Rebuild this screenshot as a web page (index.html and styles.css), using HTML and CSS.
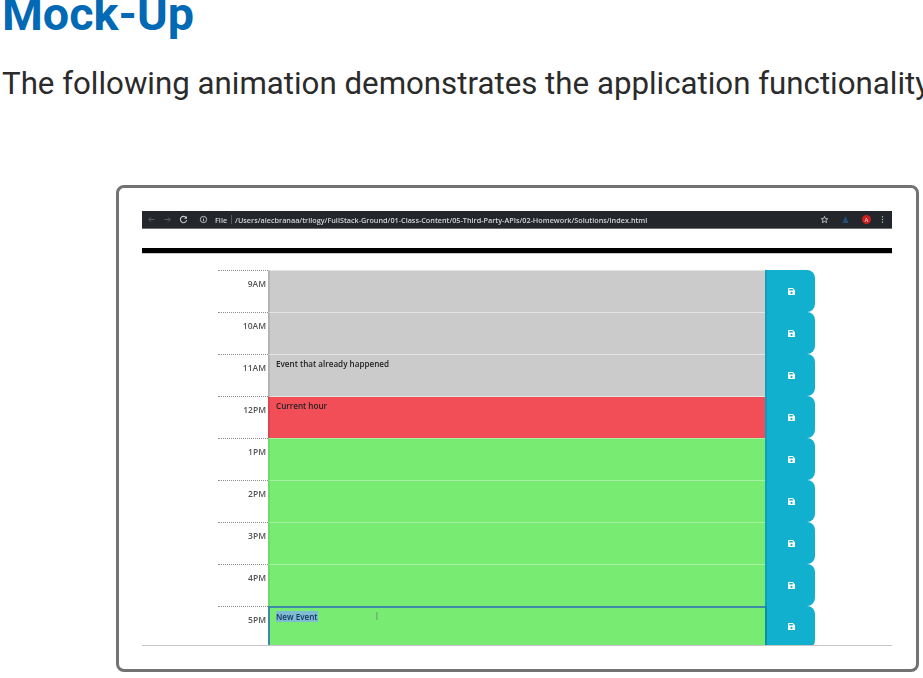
FILE: index.html
```html
<!DOCTYPE html>
<html lang="en">
<head>
    <meta charset="UTF-8">
    <meta name="viewport" content="width=device-width, initial-scale=1.0">
    <title>Mock-Up</title>
    <link rel="stylesheet" href="styles.css">
</head>
<body>
    <!-- Icono de guardar, se reutiliza en cada fila -->
    <svg class="oculto">
        <symbol id="icono-guardar" viewBox="0 0 8 8">
            <path d="M0 1a1 1 0 0 1 1-1h4.500L8 2.500V7a1 1 0 0 1-1 1H1a1 1 0 0 1-1-1zM1.500 1v1.800h4V1zM4 4.300a1.300 1.300 0 1 0 0 2.600 1.300 1.300 0 0 0 0-2.600z" fill="#fff" fill-rule="evenodd"/>
        </symbol>
    </svg>

    <main>
        <h2 class="titulo">Mock-Up</h2>
        <p class="intro">The following animation demonstrates the application functionality:</p>

        <div class="captura">
            <!-- Barra del navegador -->
            <div class="navegador">
                <svg class="nav-icono tenue" viewBox="0 0 10 10"><path d="M8.500 5H2M4.500 2.500 2 5l2.500 2.500" fill="none" stroke="currentColor" stroke-width="1"/></svg>
                <svg class="nav-icono tenue" viewBox="0 0 10 10"><path d="M1.500 5H8M5.500 2.500 8 5 5.500 7.500" fill="none" stroke="currentColor" stroke-width="1"/></svg>
                <svg class="nav-icono" viewBox="0 0 10 10"><path d="M8 3.200A3.500 3.500 0 1 0 8.500 5.500" fill="none" stroke="currentColor" stroke-width="1.200"/><path d="M8.800 1v3.200H5.600z" fill="currentColor"/></svg>
                <svg class="nav-icono info" viewBox="0 0 10 10"><circle cx="5" cy="5" r="3.500" fill="none" stroke="currentColor" stroke-width="1"/><path d="M5 3v.8M5 4.500V7" stroke="currentColor" stroke-width="1"/></svg>
                <span class="url">File</span>
                <span class="separador"></span>
                <span class="url">/Users/alecbranaa/trilogy/FullStack-Ground/01-Class-Content/05-Third-Party-APIs/02-Homework/Solutions/index.html</span>
                <span class="espacio"></span>
                <svg class="nav-icono" viewBox="0 0 10 10"><path d="M5 1.500 6 4l2.600.2-2 1.700.7 2.600L5 7.100 2.700 8.500l.7-2.600-2-1.700L4 4z" fill="none" stroke="currentColor" stroke-width="1"/></svg>
                <svg class="nav-icono azul" viewBox="0 0 10 10"><path d="M5 1 8.500 9h-7z" fill="currentColor"/></svg>
                <span class="avatar">A</span>
                <svg class="nav-icono" viewBox="0 0 10 10"><path d="M5 1.500v1.200M5 4.400v1.200M5 7.300v1.200" stroke="currentColor" stroke-width="1.300"/></svg>
            </div>

            <div class="linea-negra"></div>

            <!-- Planificador -->
            <div class="planificador">
                <div class="fila"><div class="hora">9AM</div><div class="evento pasado"></div><div class="guardar"><svg class="disco"><use href="#icono-guardar"/></svg></div></div>
                <div class="fila"><div class="hora">10AM</div><div class="evento pasado"></div><div class="guardar"><svg class="disco"><use href="#icono-guardar"/></svg></div></div>
                <div class="fila"><div class="hora">11AM</div><div class="evento pasado">Event that already happened</div><div class="guardar"><svg class="disco"><use href="#icono-guardar"/></svg></div></div>
                <div class="fila"><div class="hora">12PM</div><div class="evento presente">Current hour</div><div class="guardar"><svg class="disco"><use href="#icono-guardar"/></svg></div></div>
                <div class="fila"><div class="hora">1PM</div><div class="evento futuro"></div><div class="guardar"><svg class="disco"><use href="#icono-guardar"/></svg></div></div>
                <div class="fila"><div class="hora">2PM</div><div class="evento futuro"></div><div class="guardar"><svg class="disco"><use href="#icono-guardar"/></svg></div></div>
                <div class="fila"><div class="hora">3PM</div><div class="evento futuro"></div><div class="guardar"><svg class="disco"><use href="#icono-guardar"/></svg></div></div>
                <div class="fila"><div class="hora">4PM</div><div class="evento futuro"></div><div class="guardar"><svg class="disco"><use href="#icono-guardar"/></svg></div></div>
                <div class="fila ultima"><div class="hora">5PM</div><div class="evento futuro activo"><span class="seleccion">New Event</span><span class="cursor">I</span></div><div class="guardar"><svg class="disco"><use href="#icono-guardar"/></svg></div></div>
            </div>
        </div>
    </main>
</body>
</html>
```

FILE: styles.css
```css
/* Pagina general */
html, body {
    height: 100%;
    overflow: hidden;
}

body {
    margin: 0;
    background-color: #fff;
    color: #24292e;
    font-family: Roboto, "Liberation Sans", sans-serif;
}

main {
    width: 1000px;
    padding-left: 2px;
}

.oculto {
    display: none;
}

.titulo {
    margin: -11px 0 0;
    font-size: 46.7px;
    line-height: 50px;
    font-weight: 700;
    color: #0269b4;
}

.intro {
    margin: 27px 0 0;
    font-size: 31.25px;
    line-height: 36px;
    white-space: nowrap;
    color: #2b2b2b;
}

/* Tarjeta con la captura animada */
.captura {
    box-sizing: border-box;
    width: 803px;
    height: 487px;
    margin: 83px 0 0 114px;
    padding: 23px 24px 23px 23px;
    border: 3px solid #727272;
    border-radius: 8px;
    background-color: #fff;
}

/* Barra del navegador */
.navegador {
    display: flex;
    align-items: center;
    gap: 7px;
    height: 18px;
    padding: 0 5px;
    background-color: #23262b;
    border-bottom: 1px solid #6f7275;
    box-sizing: border-box;
    color: #c9cbcd;
    filter: blur(0.5px);
}

.nav-icono {
    width: 9px;
    height: 9px;
    flex: none;
}

.tenue {
    color: #5f6368;
}

.info {
    margin-left: 4px;
}

.azul {
    color: #1f4f73;
    margin-left: 5px;
}

.url {
    font-family: "Open Sans", sans-serif;
    font-size: 7.25px;
    font-weight: 600;
    white-space: nowrap;
    color: #d5d7d9;
}

.separador {
    width: 1px;
    height: 9px;
    margin: 0 -4px 0 -3px;
    background-color: #55585c;
}

.espacio {
    flex: 1;
}

.avatar {
    width: 9px;
    height: 9px;
    margin-left: 5px;
    border-radius: 50%;
    background-color: #c8201f;
    color: #f3d0d0;
    font-size: 6px;
    line-height: 9px;
    text-align: center;
}

.linea-negra {
    height: 5px;
    margin-top: 19px;
    background-color: #000;
    box-shadow: 0 1px 0 #c8c8c8;
}

/* Planificador */
.planificador {
    margin-top: 17px;
    height: 375px;
    overflow: hidden;
    border-bottom: 1px solid #c6c6c6;
    font-family: "Open Sans", sans-serif;
    filter: blur(0.5px);
}

.fila {
    display: grid;
    grid-template-columns: 50px 497px 50px;
    height: 42px;
    margin-left: 76px;
}

.hora {
    padding: 7px 2px 0 0;
    border-top: 1px dotted #8f8f8f;
    box-sizing: border-box;
    font-size: 8.5px;
    font-weight: 600;
    line-height: 11px;
    text-align: right;
    color: #555;
}

.evento {
    box-sizing: border-box;
    padding: 3px 6px;
    border-top: 1px solid #e4e4e4;
    border-left: 2px solid #b4b4b4;
    font-size: 8.100px;
    font-weight: 600;
    line-height: 12px;
    color: #222;
}

.pasado {
    background-color: #cbcbcb;
}

.presente {
    background-color: #f24e58;
    border-left-color: #d8474f;
}

.futuro {
    background-color: #77eb72;
    border-left-color: #6fd96b;
    border-top-color: #a6f0a3;
}

.activo {
    border-top: 2px solid #3f89a8;
    border-left: 2px solid #3f89a8;
    border-bottom: 1px solid #5cbc5c;
    padding-top: 2px;
}

.seleccion {
    background-color: #7dbcd3;
    color: #12325a;
}

.cursor {
    margin-left: 58px;
    font-size: 10px;
    font-weight: 400;
    color: #6d8f6d;
}

.guardar {
    display: flex;
    align-items: center;
    justify-content: center;
    background-color: #12b0cf;
    border-left: 2px solid #0f9fbd;
    border-radius: 0 8px 8px 0;
}

.ultima .guardar {
    border-left-color: #0d8ea8;
    border-bottom: 2px solid #0f94ad;
}

.disco {
    width: 7px;
    height: 7px;
}
```
